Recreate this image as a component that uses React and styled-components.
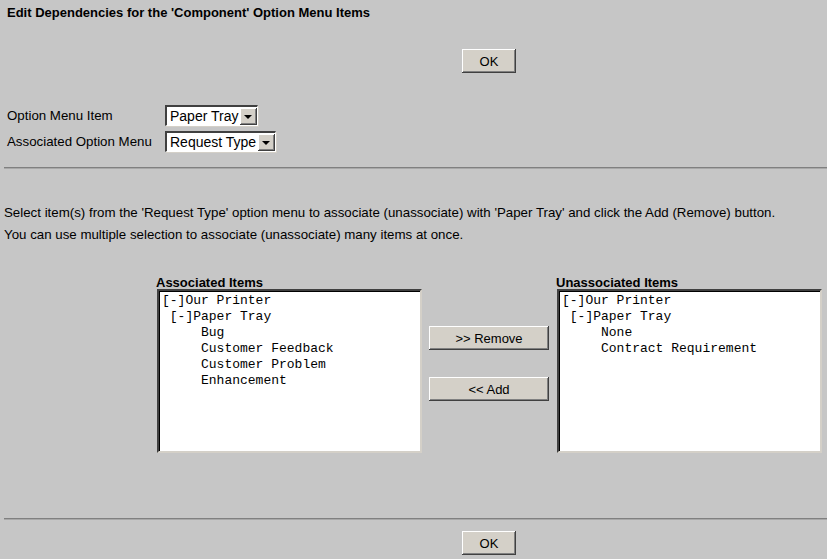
import React from 'react';
import styled, { createGlobalStyle } from 'styled-components';

const GlobalStyle = createGlobalStyle`
  html, body {
    margin: 0;
    padding: 0;
    background: #c6c6c6;
  }
  body {
    font-family: 'Liberation Sans', Arial, sans-serif;
    font-size: 12px;
    color: #000;
  }
`;

const Page = styled.div`
  width: 827px;
  height: 559px;
  box-sizing: border-box;
  background: #c6c6c6;
  overflow: hidden;
`;

const Title = styled.h1`
  margin: 0;
  padding: 5px 0 0 7px;
  height: 16px;
  font-size: 13px;
  font-weight: bold;
  line-height: 15px;
`;

const ButtonRow = styled.div`
  display: flex;
  padding-left: 462px;
  margin-top: ${(p) => p.top || 0}px;
`;

const Btn = styled.button`
  width: ${(p) => p.width || 54}px;
  height: 24px;
  box-sizing: border-box;
  padding: 0;
  background: #d4d0c8;
  font-family: 'Liberation Sans', Arial, sans-serif;
  font-size: ${(p) => p.size || 13}px;
  color: #000;
  border: none;
  box-shadow: inset -1px -1px 0 #404040, inset 1px 1px 0 #ffffff,
    inset -2px -2px 0 #808080, inset 2px 2px 0 #d4d0c8;
  cursor: default;
`;

const Form = styled.div`
  display: grid;
  grid-template-columns: 158px auto;
  row-gap: 5px;
  padding: 0 0 0 7px;
  margin-top: 32px;
  align-items: center;
  justify-items: start;
`;

const Label = styled.span`
  font-size: 13.3px;
`;

const Select = styled.div`
  display: flex;
  align-items: center;
  height: 21px;
  box-sizing: border-box;
  background: #fff;
  border-style: solid;
  border-width: 2px 1px 1px 2px;
  border-color: #404040 #ffffff #ffffff #404040;
  box-shadow: 1px 1px 0 #d4d0c8;
  padding-left: 3px;
  font-size: 14px;
`;

const SelectText = styled.span`
  padding-right: 2px;
  white-space: nowrap;
`;

const Arrow = styled.span`
  width: 17px;
  height: 17px;
  box-sizing: border-box;
  background: #d4d0c8;
  box-shadow: inset -1px -1px 0 #404040, inset 1px 1px 0 #ffffff,
    inset -2px -2px 0 #808080;
  display: flex;
  align-items: center;
  justify-content: center;
  &::after {
    content: '';
    border-left: 4px solid transparent;
    border-right: 4px solid transparent;
    border-top: 4px solid #000;
    margin: 1px 1px 0 0;
  }
`;

const Rule = styled.div`
  margin: ${(p) => p.top}px 0 0 4px;
  height: 1px;
  background: #808080;
  border-bottom: 1px solid #a8a8a8;
`;

const Instructions = styled.p`
  margin: 33px 0 0 4px;
  font-size: 13.3px;
  line-height: 22px;
`;

const Lists = styled.div`
  display: grid;
  grid-template-columns: 265px 135px 265px;
  margin: 30px 0 0 156px;
`;

const ListCol = styled.div`
  display: flex;
  flex-direction: column;
`;

const ListHead = styled.div`
  font-weight: bold;
  font-size: 13px;
  line-height: 13px;
  height: 13px;
`;

const ListBox = styled.div`
  margin-left: 1px;
  width: 265px;
  height: 164px;
  box-sizing: border-box;
  background: #fff;
  border-style: solid;
  border-width: 2px;
  border-color: #404040 #d4d0c8 #d4d0c8 #404040;
  box-shadow: inset 1px 1px 0 #000;
  padding: 2px 0 0 3px;
  font-family: 'Liberation Mono', 'Courier New', monospace;
  font-size: 13px;
  line-height: 16px;
  white-space: pre;
`;

const Middle = styled.div`
  display: flex;
  flex-direction: column;
  gap: 27px;
  padding: 50px 0 0 8px;
`;

const Footer = styled.div``;

const associated = [
  '[-]Our Printer',
  ' [-]Paper Tray',
  '     Bug',
  '     Customer Feedback',
  '     Customer Problem',
  '     Enhancement',
];

const unassociated = [
  '[-]Our Printer',
  ' [-]Paper Tray',
  '     None',
  '     Contract Requirement',
];

function Tree({ rows }) {
  return (
    <ListBox>
      {rows.map((r, i) => (
        <div key={i}>{r}</div>
      ))}
    </ListBox>
  );
}

export default function App() {
  return (
    <Page>
      <GlobalStyle />
      <Title>Edit Dependencies for the 'Component' Option Menu Items</Title>
      <ButtonRow top={28}>
        <Btn size={13}>OK</Btn>
      </ButtonRow>
      <Form>
        <Label>Option Menu Item</Label>
        <Select>
          <SelectText>Paper Tray</SelectText>
          <Arrow />
        </Select>
        <Label>Associated Option Menu</Label>
        <Select>
          <SelectText>Request Type</SelectText>
          <Arrow />
        </Select>
      </Form>
      <Rule top={15} />
      <Instructions>
        Select item(s) from the 'Request Type' option menu to associate (unassociate) with 'Paper Tray' and click the Add (Remove) button.
        <br />
        You can use multiple selection to associate (unassociate) many items at once.
      </Instructions>
      <Lists>
        <ListCol>
          <ListHead>Associated Items</ListHead>
          <Tree rows={associated} />
        </ListCol>
        <Middle>
          <Btn width={120}>&gt;&gt; Remove</Btn>
          <Btn width={120}>&lt;&lt; Add</Btn>
        </Middle>
        <ListCol>
          <ListHead>Unassociated Items</ListHead>
          <Tree rows={unassociated} />
        </ListCol>
      </Lists>
      <Footer>
        <Rule top={65} />
        <ButtonRow top={11}>
          <Btn size={13}>OK</Btn>
        </ButtonRow>
      </Footer>
    </Page>
  );
}
